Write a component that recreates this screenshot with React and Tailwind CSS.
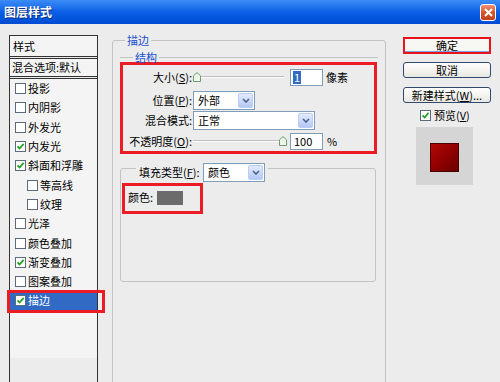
import React from 'react'

const items = [
    { t: '投影', c: false },
    { t: '内阴影', c: false },
    { t: '外发光', c: false },
    { t: '内发光', c: true },
    { t: '斜面和浮雕', c: true },
    { t: '等高线', c: false, indent: true },
    { t: '纹理', c: false, indent: true },
    { t: '光泽', c: false },
    { t: '颜色叠加', c: false },
    { t: '渐变叠加', c: true },
    { t: '图案叠加', c: false },
    { t: '描边', c: true, sel: true },
]

function Check({ checked }) {
    return (
        <span className="flex h-[11px] w-[11px] shrink-0 items-center justify-center border border-[#5b6b7c] bg-white">
            {checked && (
                <svg width="9" height="9" viewBox="0 0 9 9">
                    <path d="M1.5 4.3 L3.6 6.5 L7.6 1.8" fill="none" stroke="#22a322" strokeWidth="1.8" />
                </svg>
            )}
        </span>
    )
}

function Chevron() {
    return (
        <svg width="8" height="5" viewBox="0 0 8 5">
            <path d="M1 1 L4 4 L7 1" fill="none" stroke="#4d6185" strokeWidth="1.6" />
        </svg>
    )
}

function Select({ text, className }) {
    return (
        <div className={`flex h-[19px] items-center border border-[#7f9db9] bg-white ${className}`}>
            <span className="flex-1 pl-[4px]">{text}</span>
            <span className="mr-px flex h-[15px] w-[15px] items-center justify-center rounded-[2px] border border-[#b9cdf6] bg-linear-to-b from-[#e3ebfd] to-[#b4c8f5]">
                <Chevron />
            </span>
        </div>
    )
}

function Thumb() {
    return (
        <svg width="8" height="10" viewBox="0 0 8 10" className="shrink-0">
            <polygon points="0.5,9.5 0.5,3.8 4,0.6 7.5,3.8 7.5,9.5" fill="#eef5ea" stroke="#6f9a70" />
        </svg>
    )
}

function Track() {
    return <span className="h-[2px] flex-1 border-b border-b-white bg-[#bdbdbd]" />
}

function Btn({ children, className }) {
    return (
        <div className={`flex h-[16px] items-center justify-center rounded-[3px] border border-[#31496a] bg-linear-to-b from-white to-[#e9e8e2] ${className}`}>
            {children}
        </div>
    )
}

const U = ({ children }) => <span className="underline">{children}</span>

export default function App() {
    return (
        <div className="h-[382px] w-[500px] overflow-hidden bg-[#ececec] font-['Noto_Sans_CJK_SC',sans-serif] text-[11px] leading-none text-black">
            {/* title bar */}
            <div className="flex h-[24px] items-center bg-linear-to-b from-[#3b8cf6] via-[#0a5fe6] to-[#004bd3]">
                <span className="pl-[4px] text-[12px] font-bold text-white [text-shadow:1px_1px_0_#0a2a80]">图层样式</span>
                <span className="ml-auto mr-[4px] flex h-[17px] w-[16px] items-center justify-center rounded-[3px] border border-white bg-linear-to-b from-[#ec9274] via-[#d9562c] to-[#c2401a]">
                    <svg width="9" height="9" viewBox="0 0 9 9">
                        <path d="M1 1 L8 8 M8 1 L1 8" stroke="white" strokeWidth="2" />
                    </svg>
                </span>
            </div>

            <div className="flex items-start">
                {/* style list */}
                <div className="ml-[9px] mt-[11px] h-[360px] w-[89px] border border-[#333]">
                    <div className="flex h-[21px] items-center border-b border-[#333] bg-[#f4f4f4] pl-[3px]">样式</div>
                    <div className="mt-px flex h-[19px] items-center border-y border-[#333] bg-[#f4f4f4] pl-[2px] whitespace-nowrap">混合选项:默认</div>
                    <div className="mt-px h-[280px] border-t border-[#333] bg-[#f4f4f4]">
                        {items.map((it) => (
                            <div
                                key={it.t}
                                className={`relative flex h-[19.3px] items-center gap-[2px] ${it.indent ? 'pl-[17px]' : 'pl-[5px]'} ${it.sel ? 'bg-[#316ac5] text-white' : ''}`}
                            >
                                <Check checked={it.c} />
                                <span>{it.t}</span>
                                {it.sel && (
                                    <span className="absolute -left-[3px] -right-[8px] -top-px -bottom-[2px] border-[3px] border-[#ec1c24]" />
                                )}
                            </div>
                        ))}
                    </div>
                </div>

                {/* main panel */}
                <div className="ml-[14px] w-[274px]">
                    <div className="mt-[16px] h-[360px] rounded-[3px] border border-[#c3c3c3] px-[7px]">
                        <div className="-mt-[9px] flex h-[16px] items-center">
                            <span className="ml-[5px] bg-[#ececec] px-[2px] text-[#1a4fd0]">描边</span>
                        </div>

                        {/* structure */}
                        <div className="mt-px flex h-[16px] items-center">
                            <span className="h-px w-[13px] bg-[#c3c3c3]" />
                            <span className="px-[2px] text-[#1a4fd0]">结构</span>
                            <span className="h-px flex-1 bg-[#c3c3c3]" />
                        </div>
                        <div className="-mt-[3px] flex h-[92px] w-[257px] flex-col border-[3px] border-[#ec1c24] pt-[3px]">
                            <div className="flex h-[18px] items-center">
                                <span className="w-[69px] text-right">大小(<U>S</U>):</span>
                                <span className="ml-px flex w-[91px] items-center">
                                    <Thumb />
                                    <Track />
                                </span>
                                <span className="ml-[6px] flex h-[17px] w-[33px] items-center border border-[#7f9db9] bg-white pl-[2px]">
                                    <span className="flex h-[13px] items-center bg-[#316ac5] px-px text-white">1</span>
                                </span>
                                <span className="ml-[3px]">像素</span>
                            </div>
                            <div className="mt-[5px] flex h-[19px] items-center">
                                <span className="w-[69px] text-right">位置(<U>P</U>):</span>
                                <Select text="外部" className="ml-px w-[62px]" />
                            </div>
                            <div className="mt-px flex h-[19px] items-center">
                                <span className="w-[69px] text-right">混合模式:</span>
                                <Select text="正常" className="ml-px w-[122px]" />
                            </div>
                            <div className="mt-[2px] flex h-[18px] items-center">
                                <span className="w-[69px] text-right whitespace-nowrap">不透明度(<U>O</U>):</span>
                                <span className="ml-px flex w-[94px] items-center">
                                    <Track />
                                    <Thumb />
                                </span>
                                <span className="ml-[3px] flex h-[17px] w-[33px] items-center border border-[#7f9db9] bg-white pl-[3px]">100</span>
                                <span className="ml-[4px]">%</span>
                            </div>
                        </div>

                        {/* fill type */}
                        <div className="mt-[14px] h-[114px] w-[256px] rounded-[3px] border border-[#c3c3c3]">
                            <div className="-mt-[6px] flex h-[19px] items-center">
                                <span className="ml-[15px] flex items-center bg-[#ececec] px-[3px]">
                                    <span className="w-[60px] whitespace-nowrap">填充类型(<U>F</U>):</span>
                                    <Select text="颜色" className="ml-[4px] w-[62px]" />
                                </span>
                            </div>
                            <div className="ml-px mt-px flex h-[31px] w-[81px] items-center border-[3px] border-[#ec1c24] pb-[2px] pl-[3px]">
                                <span className="w-[29px]">颜色:</span>
                                <span className="h-[14px] w-[26px] bg-[#6b6b6b]" />
                            </div>
                        </div>
                    </div>
                </div>

                {/* buttons */}
                <div className="ml-[17px] flex w-[88px] flex-col">
                    <div className="mt-[13px] flex h-[17px] items-center justify-center border-2 border-[#e8141c] bg-[#f7f7f4] shadow-[inset_0_-1px_0_#7d9ee0]">确定</div>
                    <Btn className="mt-[8px]">取消</Btn>
                    <Btn className="mt-[9px]">新建样式(<U>W</U>)...</Btn>
                    <div className="mt-[6px] flex h-[13px] items-center pl-[17px]">
                        <Check checked />
                        <span className="ml-[3px]">预览(<U>V</U>)</span>
                    </div>
                    <div className="ml-[13px] mt-[5px] flex h-[58px] w-[57px] items-center justify-center bg-[#d5d5d5]">
                        <div className="mt-[3px] h-[29px] w-[29px] border border-[#4a0000] bg-linear-to-br from-[#b40a0a] via-[#920000] to-[#6a0000]" />
                    </div>
                </div>
            </div>
        </div>
    )
}
